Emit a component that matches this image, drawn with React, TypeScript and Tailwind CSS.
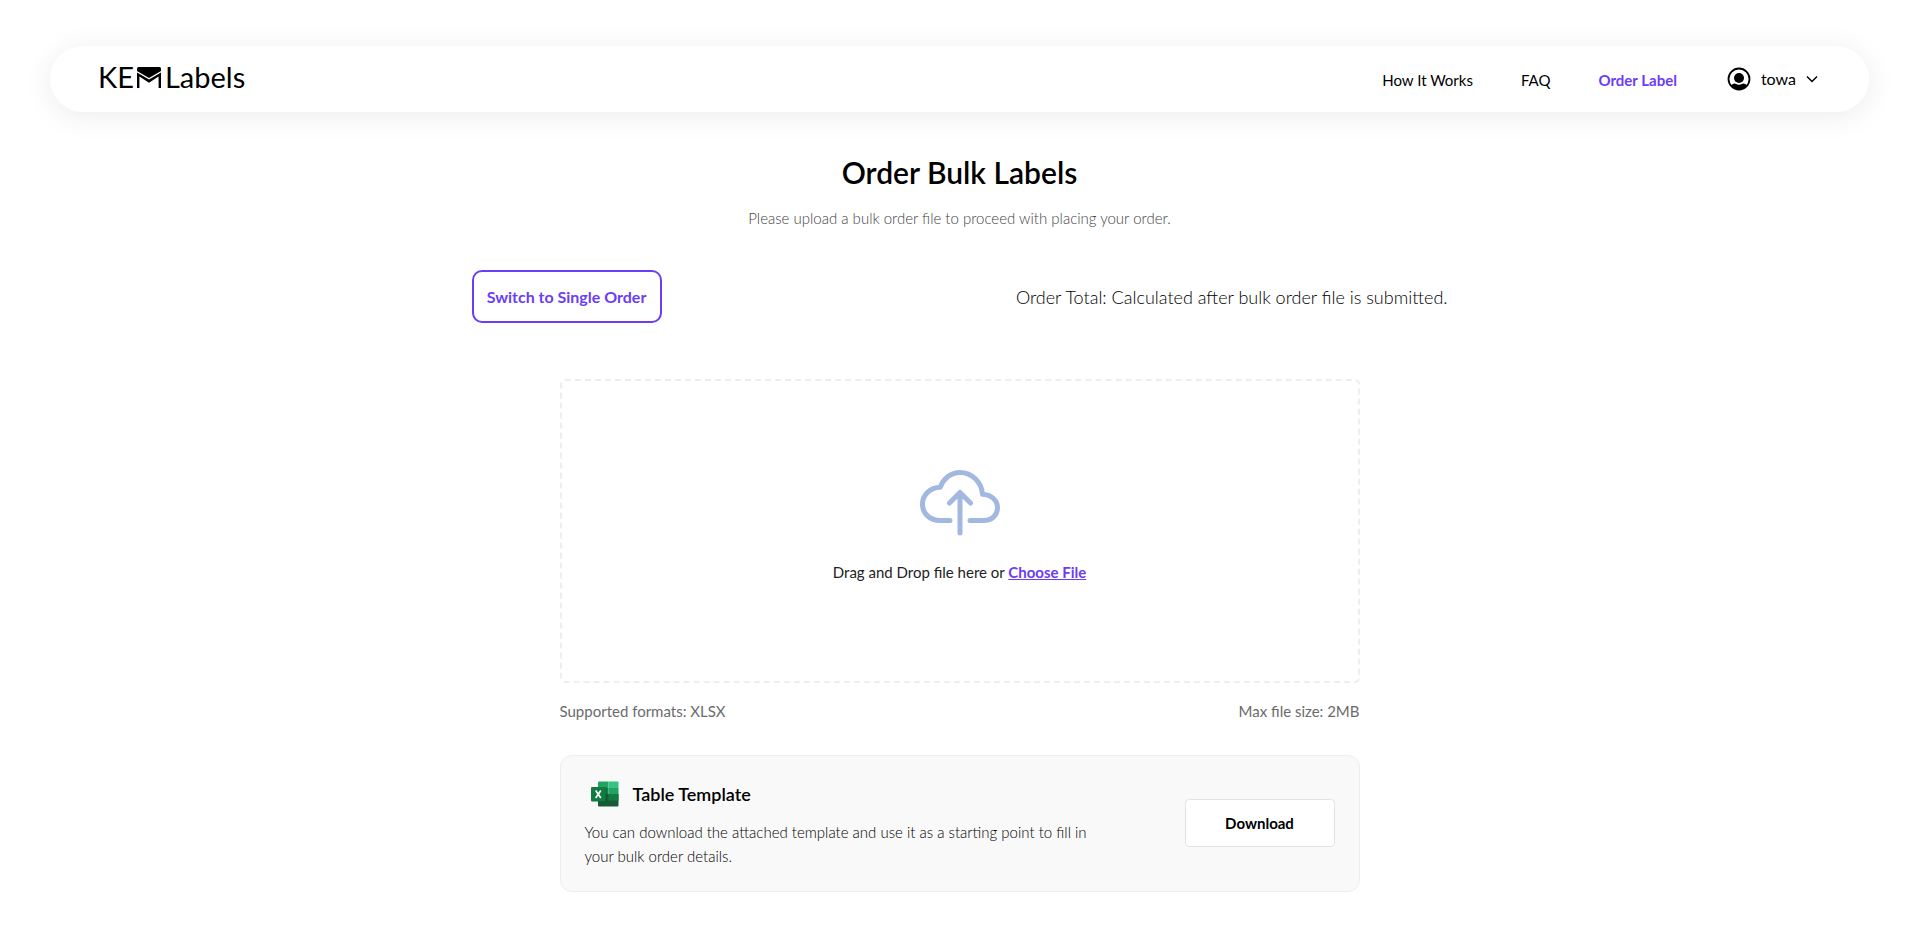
import type { ReactNode } from "react";

function Logo() {
  return (
    <a href="#" aria-label="KEM Labels" className="flex items-center pb-1 text-[29px] leading-8 text-black">
      <span>KE</span>
      <svg viewBox="0 0 24 21" className="mr-1 ml-[3px] h-[21px] w-6" aria-hidden="true">
        <path d="M0 4V1.500Q0 0 1.500 0H22.500Q24 0 24 1.500V4L12 11Z" fill="currentColor" />
        <path d="M0 5.500L12 12.500L24 5.500V21H21.600V9.500L12 15.800L2.400 9.500V21H0Z" fill="currentColor" />
      </svg>
      <span>Labels</span>
    </a>
  );
}

function UserIcon() {
  return (
    <svg viewBox="0 0 24 24" className="size-6" aria-hidden="true">
      <circle cx="12" cy="12" r="10.500" fill="none" stroke="#000" strokeWidth="1.800" />
      <circle cx="12" cy="11" r="5" fill="#000" />
      <path d="M4 18.500Q6.500 15.800 8.500 16.700Q12 18.600 15.500 16.700Q17.500 15.800 20 18.500Q16.500 22.800 12 22.800Q7.500 22.800 4 18.500Z" fill="#000" />
    </svg>
  );
}

function CloudUploadIcon() {
  return (
    <svg
      viewBox="0 0 80 66"
      className="h-[66px] w-20"
      fill="none"
      stroke="#a3b8e0"
      strokeWidth="5"
      strokeLinecap="round"
      strokeLinejoin="round"
      aria-hidden="true"
    >
      <path d="M30 50.500H20.500C9 50.500 2.500 43 2.500 34C2.500 25 10 17.500 20.300 17.200C23.500 8.500 31 2.500 40 2.500C52 2.500 61.500 12 62.500 24.300C71 24.800 77.500 30 77.500 37.500C77.500 45 72 50.500 63.500 50.500H50" />
      <path d="M40 63V23M29.500 33L40 22.500L50.500 33" />
    </svg>
  );
}

function ExcelIcon() {
  return (
    <svg viewBox="0 0 28 26" className="h-[26px] w-7" aria-hidden="true">
      <path d="M7 1.500Q7 .5 8 .5H17.500V7H7Z" fill="#21a366" />
      <path d="M17.500 .5H26.500Q27.500 .5 27.500 1.500V7H17.500Z" fill="#33c481" />
      <path d="M7 7H17.500V13H7Z" fill="#15814a" />
      <path d="M17.500 7H27.500V13H17.500Z" fill="#21a366" />
      <path d="M7 13H27.500V24.500Q27.500 25.500 26.500 25.500H8Q7 25.500 7 24.500Z" fill="#185c37" />
      <path d="M17.500 13H27.500V19.500H17.500Z" fill="#107c41" />
      <path d="M7 6H15Q16 6 16 7V20.500Q16 21.500 15 21.500H7Z" fill="#0b4a2a" opacity=".35" />
      <rect y="6" width="14.500" height="14.500" rx="1" fill="#107c41" />
      <path d="M4.700 9.500L9.800 17M9.800 9.500L4.700 17" stroke="#fff" strokeWidth="1.700" />
    </svg>
  );
}

function NavLink({ active, children }: { active?: boolean; children: ReactNode }) {
  return (
    <a href="#" className={active ? "font-bold text-[#6b3df5]" : "text-black"}>
      {children}
    </a>
  );
}

export default function App() {
  return (
    <div className="min-h-screen bg-white pt-[46px] font-['Lato','Open_Sans',sans-serif] text-black">
      <header className="mx-[50px] flex h-[66px] items-center justify-between rounded-full bg-white pr-[51px] pl-12 shadow-[0_4px_30px_rgba(0,0,0,0.08)]">
        <Logo />
        <nav className="flex items-center text-[15px] leading-6">
          <div className="flex items-center gap-12 pt-[2px]">
            <NavLink>How It Works</NavLink>
            <NavLink>FAQ</NavLink>
            <NavLink active>Order Label</NavLink>
          </div>
          <button type="button" className="ml-[50px] flex items-center gap-[10px] text-base">
            <UserIcon />
            <span>towa</span>
            <svg viewBox="0 0 12 8" className="h-2 w-3" fill="none" stroke="#000" strokeWidth="1.500" aria-hidden="true">
              <path d="M1 1.500L6 6.500L11 1.500" />
            </svg>
          </button>
        </nav>
      </header>

      <main className="mx-auto flex max-w-[976px] flex-col items-center pt-10 pb-12">
        <h1 className="text-[30px] leading-10 font-semibold">Order Bulk Labels</h1>
        <p className="mt-[14px] text-[15px] leading-6 font-light text-[#444444]">
          Please upload a bulk order file to proceed with placing your order.
        </p>

        <div className="mt-10 flex w-full items-center justify-between">
          <button
            type="button"
            className="h-[53px] w-[190px] rounded-[10px] border-2 border-[#6b3df5] text-base font-bold text-[#6b3df5]"
          >
            Switch to Single Order
          </button>
          <p className="text-lg font-light">Order Total: Calculated after bulk order file is submitted.</p>
        </div>

        <section className="mt-14 w-full max-w-[800px]">
          <div className="flex h-[304px] flex-col items-center justify-center gap-6 rounded-[5px] border-2 border-dashed border-[#eeeeee] pb-2">
            <CloudUploadIcon />
            <p className="text-[15px] leading-6 text-[#222222]">
              Drag and Drop file here or{" "}
              <label className="cursor-pointer font-bold text-[#6b3df5] underline">
                Choose File
                <input type="file" accept=".xlsx" className="sr-only" />
              </label>
            </p>
          </div>
          <div className="mt-4 flex justify-between text-[15px] leading-6 text-[#6b6b6b]">
            <span>Supported formats: XLSX</span>
            <span>Max file size: 2MB</span>
          </div>

          <div className="mt-8 flex items-center justify-between rounded-xl border border-[#eeeeee] bg-[#f9f9f9] px-6 pt-[22px] pb-[23px]">
            <div className="max-w-[520px]">
              <div className="flex items-center gap-[14px] pl-[6px]">
                <ExcelIcon />
                <h2 className="text-lg leading-8 font-semibold">Table Template</h2>
              </div>
              <p className="mt-[10px] text-[15px] leading-6 font-light text-black">
                You can download the attached template and use it as a starting point to fill in your bulk order details.
              </p>
            </div>
            <button
              type="button"
              className="h-12 w-[150px] rounded-[4px] border border-[#e4e4e4] bg-white text-[15px] font-bold"
            >
              Download
            </button>
          </div>
        </section>
      </main>
    </div>
  );
}
